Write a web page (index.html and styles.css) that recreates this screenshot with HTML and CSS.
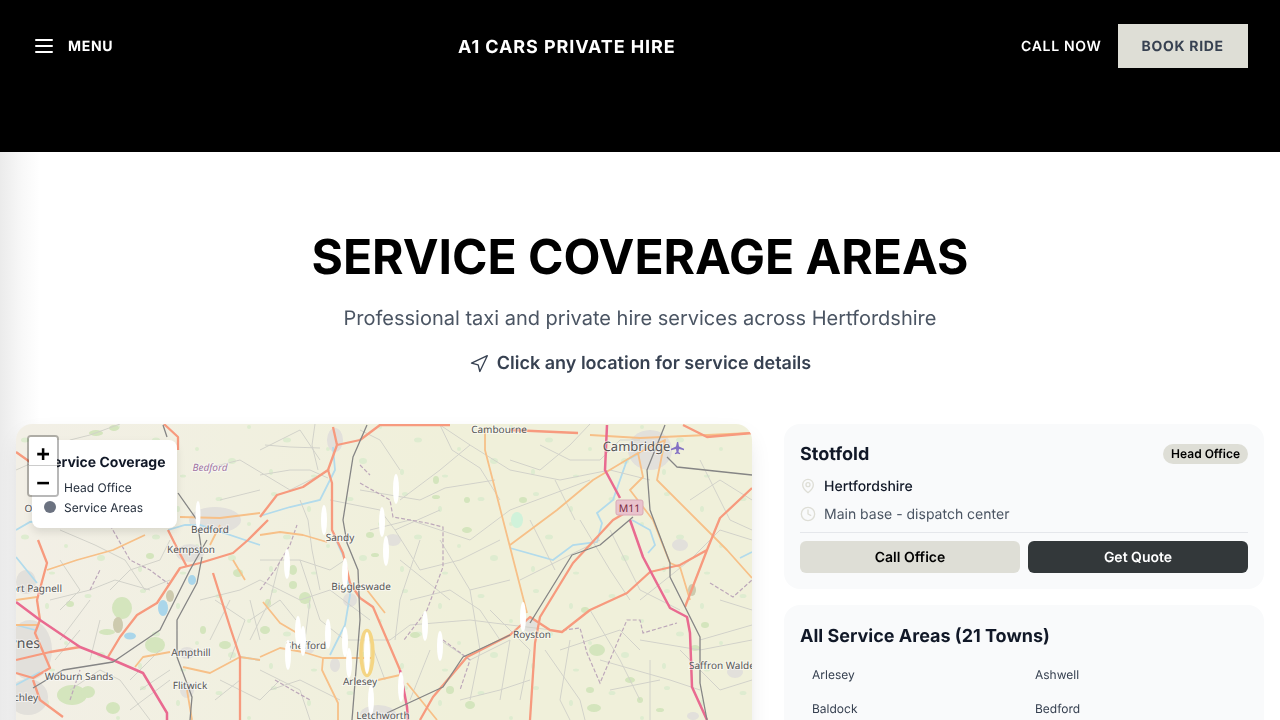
FILE: index.html
```html
<!DOCTYPE html>
<html lang="en">
<head>
<meta charset="utf-8">
<title>A1 Cars Private Hire</title>
<link rel="stylesheet" href="styles.css">
</head>
<body>
<header class="site-header">
  <button class="menu-btn">
    <svg class="menu-icon" viewBox="0 0 24 24"><path d="M4 6h16M4 12h16M4 18h16"/></svg>
    <span>MENU</span>
  </button>
  <div class="brand">A1 CARS PRIVATE HIRE</div>
  <div class="header-actions">
    <a class="call-link">CALL NOW</a>
    <a class="book-btn">BOOK RIDE</a>
  </div>
</header>
<main class="page">
  <section class="intro">
    <h1>SERVICE COVERAGE AREAS</h1>
    <p class="subtitle">Professional taxi and private hire services across Hertfordshire</p>
    <p class="hint">
      <svg class="hint-icon" viewBox="0 0 24 24"><polygon points="3 11 22 2 13 21 11 13 3 11"/></svg>
      <span>Click any location for service details</span>
    </p>
  </section>
  <section class="coverage">
    <div class="map">
      <svg class="map-art" viewBox="16 424 736 600" preserveAspectRatio="xMinYMin slice">
        <defs>
          <filter id="soft" x="-5%" y="-5%" width="110%" height="110%"><feGaussianBlur stdDeviation="0.6"/></filter>
          <pattern id="specks" width="131" height="97" patternUnits="userSpaceOnUse">
            <ellipse cx="12" cy="9" rx="3" ry="2"/><ellipse cx="47" cy="24" rx="2" ry="3"/><ellipse cx="88" cy="14" rx="3.500" ry="2"/><ellipse cx="118" cy="39" rx="2" ry="2"/>
            <ellipse cx="25" cy="52" rx="4" ry="2.500"/><ellipse cx="66" cy="61" rx="2" ry="2"/><ellipse cx="101" cy="73" rx="4" ry="3"/><ellipse cx="9" cy="84" rx="2" ry="3"/><ellipse cx="52" cy="88" rx="3" ry="1.500"/>
          </pattern>
        </defs>
        <rect class="speck-layer" x="16" y="424" width="736" height="296"/>
        <g filter="url(#soft)">
          <g class="town">
            <ellipse cx="215" cy="520" rx="26" ry="13"/><ellipse cx="190" cy="553" rx="14" ry="9"/>
            <ellipse cx="30" cy="650" rx="22" ry="30"/><ellipse cx="28" cy="697" rx="20" ry="18"/><ellipse cx="26" cy="582" rx="10" ry="12"/>
            <ellipse cx="650" cy="450" rx="22" ry="20"/><ellipse cx="378" cy="714" rx="18" ry="9"/><ellipse cx="350" cy="600" rx="7" ry="7"/>
            <ellipse cx="335" cy="440" rx="8" ry="12"/><ellipse cx="187" cy="653" rx="8" ry="6"/><ellipse cx="187" cy="690" rx="7" ry="8"/>
            <ellipse cx="335" cy="665" rx="5" ry="7"/><ellipse cx="308" cy="650" rx="6" ry="4"/><ellipse cx="530" cy="625" rx="8" ry="7"/><ellipse cx="735" cy="672" rx="8" ry="6"/><ellipse cx="693" cy="716" rx="6" ry="4"/><ellipse cx="680" cy="545" rx="8" ry="6"/><ellipse cx="393" cy="540" rx="8" ry="6"/>
          </g>
          <g class="green">
            <ellipse cx="72" cy="695" rx="15" ry="10"/><ellipse cx="88" cy="692" rx="7" ry="6"/><ellipse cx="122" cy="608" rx="10" ry="11"/><ellipse cx="107" cy="632" rx="8" ry="3"/><ellipse cx="155" cy="645" rx="10" ry="8"/>
            <ellipse cx="70" cy="604" rx="4" ry="3"/><ellipse cx="238" cy="573" rx="5" ry="4"/><ellipse cx="225" cy="645" rx="6" ry="4"/><ellipse cx="203" cy="630" rx="3" ry="4"/><ellipse cx="113" cy="708" rx="7" ry="6"/>
            <ellipse cx="96" cy="433" rx="7" ry="3"/><ellipse cx="114" cy="428" rx="5" ry="3"/><ellipse cx="150" cy="556" rx="4" ry="3"/>
            <ellipse cx="265" cy="630" rx="5" ry="4"/><ellipse cx="293" cy="570" rx="4" ry="5"/><ellipse cx="293" cy="585" rx="4" ry="4"/><ellipse cx="305" cy="598" rx="6" ry="6"/>
            <ellipse cx="436" cy="497" rx="4" ry="2"/><ellipse cx="436" cy="480" rx="3" ry="4"/><ellipse cx="467" cy="530" rx="5" ry="3"/><ellipse cx="467" cy="500" rx="3" ry="3"/><ellipse cx="375" cy="555" rx="4" ry="2"/><ellipse cx="370" cy="535" rx="4" ry="3"/>
            <ellipse cx="523" cy="500" rx="4" ry="3"/><ellipse cx="597" cy="650" rx="8" ry="6"/><ellipse cx="590" cy="690" rx="4" ry="3"/><ellipse cx="630" cy="680" rx="5" ry="3"/><ellipse cx="695" cy="648" rx="5" ry="3"/><ellipse cx="594" cy="708" rx="7" ry="4"/><ellipse cx="640" cy="700" rx="3" ry="3"/>
            <ellipse cx="705" cy="625" rx="4" ry="3"/><ellipse cx="585" cy="610" rx="4" ry="3"/><ellipse cx="660" cy="710" rx="4" ry="2"/><ellipse cx="450" cy="690" rx="4" ry="4"/><ellipse cx="470" cy="705" rx="5" ry="4"/><ellipse cx="415" cy="635" rx="5" ry="3"/><ellipse cx="268" cy="603" rx="3" ry="4"/>
          </g>
          <ellipse class="mint" cx="517" cy="520" rx="6" ry="8"/>
          <ellipse class="tan" cx="118" cy="625" rx="5" ry="8"/><ellipse class="tan" cx="170" cy="596" rx="4" ry="6"/><ellipse class="tan" cx="692" cy="590" rx="4" ry="6"/>
          <g class="water">
            <ellipse class="lake" cx="163" cy="608" rx="5" ry="8"/><ellipse class="lake" cx="130" cy="636" rx="6" ry="3.500"/><ellipse class="lake" cx="192" cy="580" rx="4" ry="5"/>
            <path d="M16 557 37 583M16 625 35 630M16 530 30 522 50 520 78 515M168 530 185 525 200 525 260 545M333 447 335 470 320 500 290 507 260 516M335 538 345 560 350 595 345 625 330 655M510 548 553 560 573 545 597 542 602 523 597 513 613 500 627 460 640 453M632 520 650 530 655 545 648 553M740 558 752 552M240 657 260 660M16 685 40 672"/>
          </g>
          <g class="minor">
            <path d="M16 470 50 455 70 440 90 435 120 424M60 530 95 545 125 560 145 590 170 580M50 600 90 590 115 580 150 590M70 690 100 670 120 680 150 720M200 600 240 590 260 580 300 600 330 590 370 620M200 470 240 460 290 490 330 470M260 450 300 430 320 460M220 500 260 490M260 560 300 560 330 570 345 560M300 560 320 620 345 640M345 640 390 640 410 625 470 620 510 625 552 630M370 530 410 520 470 540 510 510 590 480M400 500 440 470 470 445 510 470M470 445 440 425M510 460 540 470 570 445 590 424M510 470 560 480 610 470 650 480M520 580 560 560 600 540M590 610 620 660 640 700M580 520 610 570 630 600M640 600 690 560 720 530 752 540M700 640 752 625M640 640 700 650 752 640M570 640 560 700 570 720M600 660 670 680 700 690M270 690 300 680 340 700M410 600 450 590 480 610 500 640M440 540 470 590 510 580M440 640 470 660 510 640 500 700M460 700 500 690 530 680M330 500 380 510 395 530 440 510M250 620 280 600 296 620M90 660 100 620M170 680 130 710M60 640 90 600M215 600 245 620 230 660M260 670 300 690 310 720M400 470 380 440 360 430"/>
            <path d="M260 475 290 470 310 470 328 478M265 445 290 447 320 448M315 424 312 445 318 470M300 500 308 520 312 550 320 590M360 490 420 500 445 488 495 480M440 425 452 450 480 468 500 500M395 530 420 570 460 560 500 540M400 560 450 600M420 540 400 600 395 640M470 590 480 650 470 700M490 610 530 650 520 700M280 560 270 600 250 640M310 600 305 640M370 640 385 680M430 650 410 700M545 650 580 700 585 720M560 650 620 630 640 650M610 530 640 590 680 610M530 520 555 570M555 480 575 520M600 460 620 440 640 440M690 500 720 480 752 500M700 460 730 520 752 530M720 600 752 610M680 650 720 690 752 680M650 660 650 720M610 690 660 680M540 445 570 460 600 460M30 480 60 510 90 500 130 520M100 470 140 480 170 500M60 560 80 590 60 610M130 570 160 560 170 540M140 690 170 670M55 660 80 630M220 680 260 700 280 680M250 600 260 640M210 640 230 600M215 700 240 680M130 680 160 650M90 520 120 500 160 510M110 590 130 570"/>
          </g>
          <g class="bound">
            <path d="M360 483 390 500 393 517 427 523 443 527 443 567 427 610 404 640M360 465 370 475M260 590 275 570 290 545 297 525M563 630 580 628 587 653 600 683 627 620 640 620 643 633 677 623M710 583 733 597 752 580M110 525 130 560 150 570 170 585M90 590 100 570M70 700 80 670M443 640 470 660 460 690M275 680 310 700"/>
          </g>
          <g class="orange">
            <path d="M16 600 37 597M16 625 37 625M47 570 77 560 113 550 145 535M135 667 143 657 170 652M183 667 210 673 240 657 260 660M187 690 192 720M180 517 220 518 260 513M210 545 220 525M233 560 245 580M260 535 280 532 303 535 327 542M485 427 485 450 510 547 527 613M263 602 280 623 297 633M260 657 280 648 303 652 323 658 373 658M323 658 322 670 338 703 338 720M378 680 400 675M407 683 437 720M510 545 557 510 593 480 638 453 643 477 630 490 653 520 670 563 680 567 690 600M638 453 665 440 657 480 710 533 727 550 752 578M590 435 640 438 752 433M367 590 385 613"/>
          </g>
          <g class="trunk">
            <path d="M333 427 337 445 328 470 332 483 332 530 343 553 350 583 360 598 373 607 400 670M260 517 277 495 303 487 328 470M337 445 360 440 380 425 450 425M420 720 433 697 467 657 510 635 530 617 550 630 562 632 590 610 627 593 650 572 680 565 707 550 720 518 752 488M707 550 685 607M530 720 535 643 540 617 573 563 613 520 630 510M510 430 578 433M683 425 707 437 752 433M38 540 47 563 37 600 40 620 35 633 50 668 33 678 16 673M16 660 50 652 80 647M108 657 120 637 137 615 157 603 180 568 200 563 233 553 248 540 268 520M213 573 230 627 240 657 240 720M33 680 40 700 63 717M16 452 30 462M164 424 178 437 178 450M168 530 178 550 187 567"/>
          </g>
          <g class="motorway">
            <path d="M607 425 605 470 620 498M630 520 643 557 670 608 687 617 690 633 692 687 707 720M16 602 40 620 80 647 113 660 143 673 167 713 167 720M400 670 407 707 408 720"/>
          </g>
          <g class="rail">
            <path d="M367 425 353 457 343 520 347 543 358 570 360 620 352 720M387 713 443 687 463 657 510 635M530 623 572 555 600 545 633 517M665 425 647 470 650 510 670 563 670 577 700 637 700 683 707 720M667 457 677 467 752 475M33 688 63 670 113 662 160 630 190 570 207 540M202 557 197 583 177 620 177 657 192 697 190 720M163 425 167 437M178 493 197 520 202 553"/>
          </g>
        </g>
        <rect class="shield" x="616" y="500" width="27" height="15" rx="2"/>
        <text class="shield-text" x="629.5" y="511.5">M11</text>
        <path class="plane" d="M677 442l1.200 0 .8 4.600 5 2.200v1.400l-5-1.200-.5 3 1.600 1.200v1l-2.600-.7-2.600.7v-1l1.600-1.200-.5-3-5 1.200v-1.400l5-2.200z"/>
        <g class="labels">
          <text x="499" y="433">Cambourne</text>
          <text x="636.500" y="451" class="big">Cambridge</text>
          <text x="210" y="471" class="admin">Bedford</text>
          <text x="210" y="533">Bedford</text>
          <text x="191" y="553">Kempston</text>
          <text x="340" y="541">Sandy</text>
          <text x="361" y="590">Biggleswade</text>
          <text x="306" y="649">Shefford</text>
          <text x="360" y="685">Arlesey</text>
          <text x="383" y="719">Letchworth</text>
          <text x="532" y="638">Royston</text>
          <text x="725" y="669">Saffron Walden</text>
          <text x="62" y="592" class="end">Newport Pagnell</text>
          <text x="40" y="648" class="end mk">Milton Keynes</text>
          <text x="38" y="701" class="end">Bletchley</text>
          <text x="79" y="680">Woburn Sands</text>
          <text x="191" y="656">Ampthill</text>
          <text x="190" y="689">Flitwick</text>
          <text x="38" y="512">Olney</text>
        </g>
        <g class="pins">
          <ellipse class="pin-ring" cx="367" cy="653" rx="6" ry="22.500"/>
          <ellipse cx="198" cy="515" rx="2.500" ry="14"/><ellipse cx="396" cy="489" rx="3" ry="15"/><ellipse cx="324" cy="520" rx="3" ry="15"/><ellipse cx="382" cy="522" rx="3" ry="15"/><ellipse cx="386" cy="551" rx="3" ry="15"/><ellipse cx="287" cy="564" rx="3" ry="15"/><ellipse cx="345" cy="573" rx="3" ry="15"/><ellipse cx="425" cy="626" rx="3" ry="15"/><ellipse cx="440" cy="646" rx="3" ry="15"/><ellipse cx="298" cy="631" rx="3" ry="15"/><ellipse cx="303" cy="641" rx="3" ry="15"/><ellipse cx="288" cy="655" rx="3" ry="15"/><ellipse cx="328" cy="634" rx="3" ry="15"/><ellipse cx="345" cy="642" rx="3" ry="15"/><ellipse cx="349" cy="663" rx="3" ry="15"/><ellipse cx="367" cy="653" rx="3" ry="21"/><ellipse cx="401" cy="687" rx="3" ry="15"/><ellipse cx="371" cy="700" rx="3" ry="15"/><ellipse cx="523" cy="617" rx="3" ry="15"/>
        </g>
      </svg>
      <div class="legend">
        <h3>Service Coverage</h3>
        <div class="legend-row"><span class="dot dot-head"></span>Head Office</div>
        <div class="legend-row"><span class="dot dot-area"></span>Service Areas</div>
      </div>
      <div class="zoom-ctl"><span class="zoom-btn">+</span><span class="zoom-btn">&#8722;</span></div>
    </div>
    <aside class="side">
      <div class="card">
        <div class="card-head">
          <h2>Stotfold</h2>
          <span class="badge">Head Office</span>
        </div>
        <div class="info-row strong">
          <svg class="info-icon" viewBox="0 0 24 24"><path d="M20 10c0 6-8 12-8 12s-8-6-8-12a8 8 0 0 1 16 0Z"/><circle cx="12" cy="10" r="3"/></svg>
          <span>Hertfordshire</span>
        </div>
        <div class="info-row">
          <svg class="info-icon" viewBox="0 0 24 24"><circle cx="12" cy="12" r="10"/><polyline points="12 6 12 12 16 14"/></svg>
          <span>Main base - dispatch center</span>
        </div>
        <div class="actions">
          <button class="btn btn-light">Call Office</button>
          <button class="btn btn-dark">Get Quote</button>
        </div>
      </div>
      <div class="card card-towns">
        <h2>All Service Areas (21 Towns)</h2>
        <ul class="towns">
          <li>Arlesey</li><li>Ashwell</li><li>Baldock</li><li>Bedford</li><li>Biggleswade</li><li>Buntingford</li><li>Clifton</li><li>Hatfield</li><li>Henlow</li><li>Hitchin</li><li>Letchworth</li><li>Luton</li><li>Royston</li><li>Sandy</li><li>Shefford</li><li>Shillington</li><li>Stevenage</li><li>Stotfold</li><li>Ware</li><li>Welwyn</li><li>Hertford</li>
        </ul>
      </div>
    </aside>
  </section>
</main>
</body>
</html>
```
FILE: styles.css
```css
* { box-sizing: border-box; }
html, body { margin: 0; padding: 0; }
body { font-family: Inter, "Liberation Sans", sans-serif; color: #111827; background: #fff; text-rendering: geometricPrecision; }
h1, h2, h3, p, ul { margin: 0; padding: 0; }

.site-header {
  display: flex;
  justify-content: space-between;
  align-items: center;
  height: 152px;
  padding: 24px 32px 84px;
  background: #000;
  color: #fff;
}
.menu-btn {
  display: flex;
  align-items: center;
  gap: 12px;
  padding: 0;
  border: 0;
  background: none;
  color: #fff;
  font: 700 14px Inter, sans-serif;
  letter-spacing: 0.7px;
  text-rendering: geometricPrecision;
  will-change: transform;
}
.menu-icon { width: 24px; height: 24px; fill: none; stroke: #fff; stroke-width: 2; stroke-linecap: round; }
.brand { margin-top: 2px; font-size: 18px; font-weight: 700; letter-spacing: 0.9px; will-change: transform; }
.header-actions { display: flex; align-items: center; gap: 16px; will-change: transform; }
.call-link { font-size: 14px; font-weight: 600; letter-spacing: 0.7px; }
.book-btn {
  display: flex;
  align-items: center;
  height: 44px;
  padding: 0 24px;
  background: #deded6;
  color: #374151;
  font-size: 14px;
  font-weight: 700;
  letter-spacing: 0.7px;
}

.page { padding: 81px 16px 32px; background: linear-gradient(90deg, #ebebeb, #f8f8f8 22px, #fff 40px); }
.intro { text-align: center; margin-bottom: 46px; will-change: transform; }
h1 { font-size: 48px; line-height: 48px; font-weight: 700; color: #000; margin-bottom: 23px; }
.subtitle { font-size: 20px; line-height: 28px; color: #4b5563; margin-bottom: 18px; }
.hint { display: flex; justify-content: center; align-items: center; gap: 8px; font-size: 18px; line-height: 28px; font-weight: 600; color: #374151; }
.hint-icon { width: 20px; height: 20px; fill: none; stroke: #374151; stroke-width: 1.6; stroke-linejoin: round; stroke-linecap: round; }

.coverage { display: grid; grid-template-columns: 736px 480px; gap: 32px; align-items: start; }

.map {
  position: relative;
  height: 600px;
  border-radius: 16px;
  overflow: hidden;
  background: linear-gradient(90deg, #f2efe6, #f1f0e0 30%, #f0f0da 60%);
  box-shadow: 0 10px 25px -5px rgba(0,0,0,.12), 0 8px 10px -6px rgba(0,0,0,.08);
}
.map-art { display: block; width: 736px; height: 600px; }
.speck-layer { fill: url(#specks); }
#specks ellipse { fill: #deecd0; }
.town ellipse { fill: #e2e0db; }
.green ellipse { fill: #d4e5bd; }
.mint { fill: #d0f2da; }
.tan { fill: #cdcaae; }
.water path { fill: none; stroke: #b2dbec; stroke-width: 1.8; }
.lake { fill: #aad6ea; }
.minor path { fill: none; stroke: #d2d2ca; stroke-width: 1; }
.bound path { fill: none; stroke: #bda8ba; stroke-width: 1.2; stroke-dasharray: 4 2; }
.orange path { fill: none; stroke: #f7c088; stroke-width: 1.8; stroke-linejoin: round; }
.trunk path { fill: none; stroke: #f79a7e; stroke-width: 2.3; stroke-linejoin: round; }
.motorway path { fill: none; stroke: #e96a90; stroke-width: 2.500; stroke-linejoin: round; }
.rail path { fill: none; stroke: #858585; stroke-width: 1.3; stroke-linejoin: round; }
.shield { fill: #e9c3cd; stroke: #d8a9b6; stroke-width: 1; }
.shield-text { font: 10.5px "Noto Sans", sans-serif; fill: #7a2b40; text-anchor: middle; }
.plane { fill: #8472c4; }
.labels text {
  font: 10px "Noto Sans", sans-serif;
  fill: #555;
  text-anchor: middle;
  stroke: rgba(255,255,255,.55);
  stroke-width: 2px;
  paint-order: stroke;
}
.labels .big { font-size: 13px; }
.labels .mk { font-size: 14px; }
.labels .end { text-anchor: end; }
.labels .admin { font-style: italic; fill: #a277a4; }
.pins ellipse { fill: #fff; }
.pins .pin-ring { fill: rgba(245,205,90,.3); stroke: #f4d583; stroke-width: 3.5; }

.legend {
  position: absolute;
  top: 16px;
  left: 16px;
  width: 145px;
  height: 88px;
  padding: 13px 12px 12px;
  border-radius: 8px;
  background: #fff;
  box-shadow: 0 4px 8px rgba(0,0,0,.1);
  font-size: 12px;
  color: #1f2937;
  will-change: transform;
}
.legend h3 { font-size: 14px; line-height: 20px; font-weight: 700; color: #111827; margin-bottom: 4px; white-space: nowrap; }
.legend-row { display: flex; align-items: center; gap: 8px; height: 20px; }
.dot { width: 12px; height: 12px; border-radius: 50%; flex: none; }
.dot-head { background: #deded6; }
.dot-area { background: #6b7280; }

.zoom-ctl {
  position: absolute;
  top: 11px;
  left: 11px;
  display: flex;
  flex-direction: column;
  width: 32px;
  height: 62px;
  border: 2px solid rgba(0,0,0,.28);
  border-radius: 4px;
  background-clip: padding-box;
  will-change: transform;
}
.zoom-btn {
  display: block;
  height: 29px;
  text-align: center;
  background: #fff;
  color: #000;
  font: 700 22px/35px "DejaVu Sans Mono", "Liberation Mono", monospace;
  overflow: hidden;
}
.zoom-btn:first-child { border-bottom: 1px solid #ccc; border-radius: 2px 2px 0 0; }
.zoom-btn:last-child { border-radius: 0 0 2px 2px; }

.side { display: flex; flex-direction: column; gap: 16px; will-change: transform; }
.card { padding: 16px; border-radius: 16px; background: #f9fafb; }
.card h2 { font-size: 18px; line-height: 28px; font-weight: 700; color: #111827; }
.card-head { display: flex; justify-content: space-between; align-items: flex-start; margin-bottom: 7px; }
.card-head h2 { margin-top: 1px; }
.card-towns { padding-top: 18px; }
.badge { padding: 0 8px; height: 20px; line-height: 20px; border-radius: 10px; background: #deded6; color: #000; font-size: 12px; font-weight: 600; margin-top: 4px; }
.info-row { display: flex; align-items: center; gap: 8px; height: 20px; margin-bottom: 8px; font-size: 14px; color: #4b5563; }
.info-row.strong { color: #111827; font-weight: 500; }
.info-icon { width: 16px; height: 16px; flex: none; fill: none; stroke: #deded6; stroke-width: 2; stroke-linecap: round; stroke-linejoin: round; }
.actions { display: flex; gap: 8px; padding-top: 8px; border-top: 1px solid #e5e7eb; }
.btn { flex: 1; height: 32px; border: 0; border-radius: 6px; font: 600 14px Inter, sans-serif; text-rendering: geometricPrecision; }
.btn-light { background: #deded6; color: #000; }
.btn-dark { background: #33383a; color: #fff; }
.towns { list-style: none; display: grid; grid-template-columns: 223px 1fr; margin-top: 7px; }
.towns li { padding: 8px 12px; height: 34px; line-height: 18px; font-size: 12px; color: #374151; }
```
